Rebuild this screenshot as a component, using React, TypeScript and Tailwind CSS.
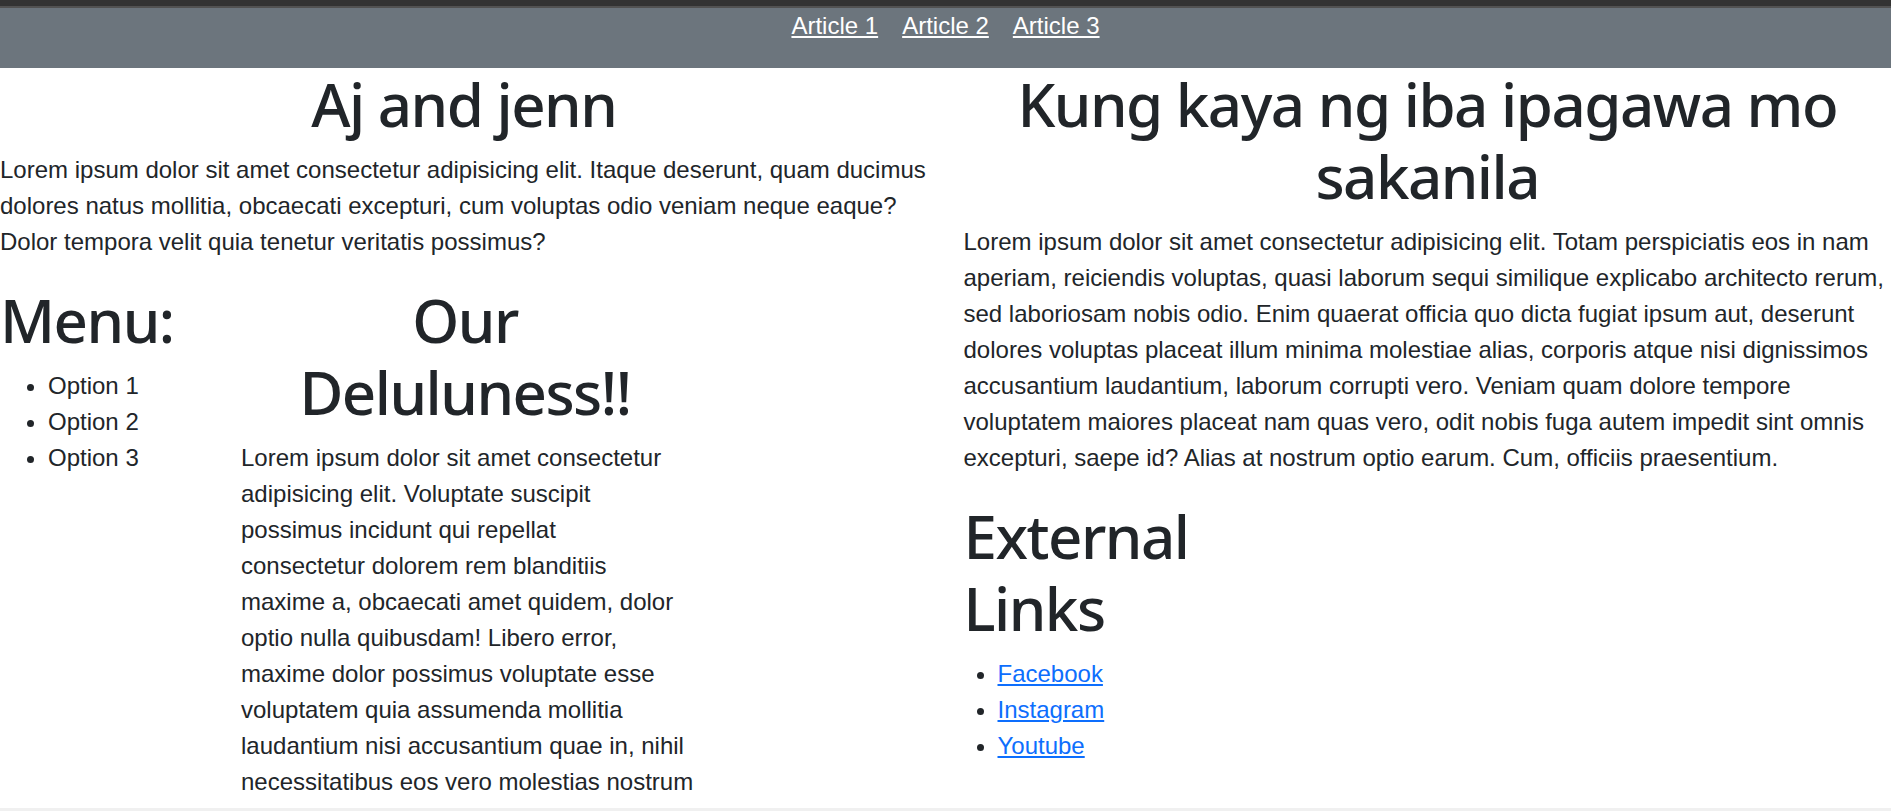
import React from 'react';

const navLinks = ['Article 1', 'Article 2', 'Article 3'];
const menuOptions = ['Option 1', 'Option 2', 'Option 3'];
const externalLinks = ['Facebook', 'Instagram', 'Youtube'];

// lines of the middle paragraph, broken where the page breaks them
const delulu = ['Lorem ipsum dolor sit amet consectetur', 'adipisicing elit. Voluptate suscipit', 'possimus incidunt qui repellat', 'consectetur dolorem rem blanditiis', 'maxime a, obcaecati amet quidem, dolor', 'optio nulla quibusdam! Libero error,', 'maxime dolor possimus voluptate esse', 'voluptatem quia assumenda mollitia', 'laudantium nisi accusantium quae in, nihil', 'necessitatibus eos vero molestias nostrum'];

const heading = "font-['Noto_Sans',sans-serif] text-[60px] leading-[1.2] font-medium tracking-[-0.025em] mb-3";

const App = () => {
  return <div className="min-h-screen bg-white text-[#212529] font-['Liberation_Sans',Arial,sans-serif] text-[24px] leading-[1.5]">
      {/* window chrome strip */}
      <div className="h-[6px] bg-[#333333]"></div>
      <div className="h-[2px] bg-[#525252]"></div>

      <nav className="bg-[#6c757d]">
        <ul className="flex justify-center gap-6 pb-6">
          {navLinks.map(link => <li key={link}>
              <a href="#" className="text-white underline">
                {link}
              </a>
            </li>)}
        </ul>
      </nav>

      <main className="grid grid-cols-2 gap-x-[36px]">
        <section>
          <h1 className={`${heading} text-center`}>Aj and jenn</h1>
          <p className="mb-6">
            Lorem ipsum dolor sit amet consectetur adipisicing elit. Itaque deserunt, quam ducimus dolores natus mollitia, obcaecati excepturi, cum voluptas odio veniam neque eaque? Dolor tempora velit quia tenetur veritatis possimus?
          </p>
          <div className="grid grid-cols-[241px_448px_1fr]">
            <div>
              <h1 className={heading}>Menu:</h1>
              <ul className="list-disc pl-12">
                {menuOptions.map(option => <li key={option}>{option}</li>)}
              </ul>
            </div>
            <div>
              <h1 className={`${heading} text-center`}>
                Our
                <br />
                Deluluness!!
              </h1>
              <p className="mb-6 whitespace-nowrap">
                {delulu.map((line, i) => <React.Fragment key={i}>
                    {line}
                    {i < delulu.length - 1 && <br />}
                  </React.Fragment>)}
              </p>
            </div>
          </div>
        </section>

        <section>
          <h1 className={`${heading} text-center`}>
            Kung kaya ng iba ipagawa mo sakanila
          </h1>
          <p className="mb-6">
            Lorem ipsum dolor sit amet consectetur adipisicing elit. Totam perspiciatis eos in nam aperiam, reiciendis voluptas, quasi laborum sequi similique explicabo architecto rerum, sed laboriosam nobis odio. Enim quaerat officia quo dicta fugiat ipsum aut, deserunt dolores voluptas placeat illum minima molestiae alias, corporis atque nisi dignissimos accusantium laudantium, laborum corrupti vero. Veniam quam dolore tempore voluptatem maiores placeat nam quas vero, odit nobis fuga autem impedit sint omnis excepturi, saepe id? Alias at nostrum optio earum. Cum, officiis praesentium.
          </p>
          <div className="grid grid-cols-4">
            <div>
              <h1 className={heading}>External Links</h1>
              <ul className="list-disc pl-[34px]">
                {externalLinks.map(link => <li key={link}>
                    <a href="#" className="text-[#0d6efd] underline">
                      {link}
                    </a>
                  </li>)}
              </ul>
            </div>
          </div>
        </section>
      </main>

      {/* scrollbar edge along the bottom of the window */}
      <div className="fixed bottom-0 left-0 right-0 h-[3px] bg-[#f0f0f0]"></div>
    </div>;
};

export default App;
